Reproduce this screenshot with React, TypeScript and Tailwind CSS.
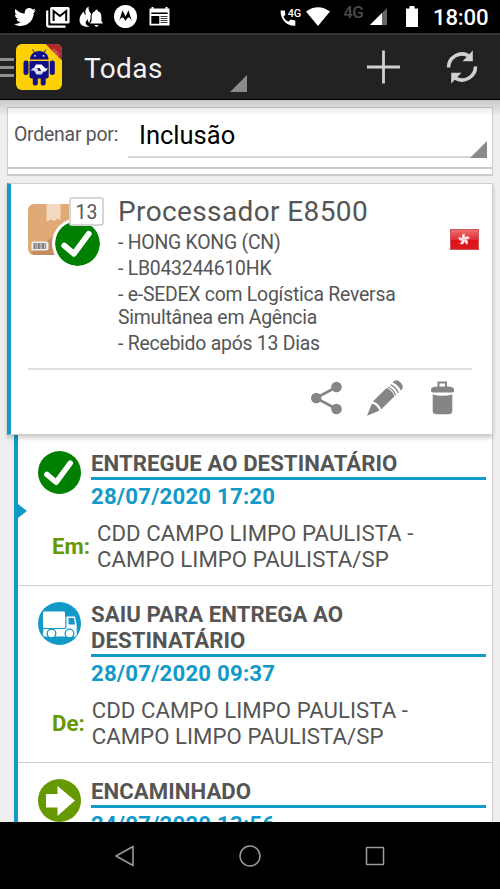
import React from "react";
import { FaTwitter } from "react-icons/fa";

const StatusBar = () => (
  <div className="flex h-[33px] shrink-0 items-center justify-between bg-black text-white">
    <div className="flex items-center pl-[14px]">
      <FaTwitter className="h-[22px] w-[22px]" />
      <svg className="ml-[10px] h-[22px] w-[24px]" viewBox="0 0 24 22" fill="none">
        <path d="M1.2 4.5v14.3q0 1.8 1.8 1.8h16.5" stroke="white" strokeWidth="2.2" />
        <rect x="4.2" y="1" width="19.4" height="16.6" rx="1.6" fill="white" />
        <path d="M7.6 15V5l6.3 5 6.3-5v10" stroke="black" strokeWidth="2" />
      </svg>
      <svg className="ml-[9px] h-[22px] w-[24px]" viewBox="0 0 24 22" fill="white">
        <path d="M9.7 0.5C5.5 3 6 6.500 7.200 9.200 5.400 8.700 5 7 5 5.600 1.800 8.300 0.500 11.300 0.500 14c0 3.600 2.300 6 6 6.700 2 0.300 3.200 0 4.200-0.500-3.800-0.700-5.200-3.200-3-5.800l1.200-1.300c-0.200 1.800 0.300 2.900 1.300 3.800C12.300 13.500 11 9.500 12.200 8 9.800 5.500 9.200 2.600 9.700 0.500z" />
        <path d="M17.500 3.800c1 0 1.400 0.700 1.400 1.500 2.600 0.800 3.500 3 3.500 5.500v4.200l1.600 2.600H11l1.600-2.600v-4.200c0-2.500 0.900-4.700 3.500-5.500 0-0.800 0.400-1.500 1.400-1.500z" />
        <path d="M15.700 18.900h3.600q-0.300 1.900-1.800 1.900t-1.800-1.900z" />
      </svg>
      <svg className="ml-[11px] h-[23px] w-[23px]" viewBox="0 0 23 23">
        <circle cx="11.500" cy="11.500" r="11.500" fill="white" />
        <path d="M5 16.500 8.500 5.200l3 6.400 3-6.400L18 16.500c-1.200-2.600-2.200-4-3.300-4-1.200 0-2 1.300-3.200 3.600-1.200-2.300-2-3.600-3.200-3.600-1.100 0-2.100 1.400-3.300 4z" fill="black" />
      </svg>
      <svg className="ml-[12px] h-[20px] w-[21px]" viewBox="0 0 21 20">
        <path d="M0.500 1.500h2V0h2v1.500h12V0h2v1.500h2V18.500h-20z" fill="white" />
        <path d="M2.300 5.500h16.400v1.500H2.300zM2.300 9h8v7.700h-8z" fill="black" />
        <path d="M11.500 9.500h7M11.500 11.500h7M11.500 13.500h7M11.500 15.500h7" stroke="black" strokeWidth="0.800" />
      </svg>
    </div>
    <div className="flex items-center pr-[11px]">
      <svg className="h-[22px] w-[22px]" viewBox="0 0 22 22">
        <path d="M0.600 4.500h4.200l0.600 4.300-2 2q1.800 3.700 5 5l2.200-2.200 4.700 0.900v5.200C7 20.500 0.200 13.500 0.600 4.500z" fill="white" />
        <text x="7.700" y="11" fill="white" fontSize="11.500" fontFamily="Roboto" fontWeight="500" textLength="13.500" lengthAdjust="spacingAndGlyphs">4G</text>
      </svg>
      <svg className="ml-[4px] h-[19px] w-[24px]" viewBox="0 0 24 19">
        <path d="M0 4.500Q12-4 24 4.500L12 19z" fill="white" />
      </svg>
      <span className="ml-[13px] -mt-[9px] text-[17px] leading-5 font-medium tracking-[-0.8px] text-[#4a4a4a]">4G</span>
      <svg className="ml-[7px] h-[17px] w-[17px]" viewBox="0 0 17 17">
        <path d="M0 17 17 0v17z" fill="#666" />
        <path d="M0 17 12 5v12z" fill="white" />
      </svg>
      <svg className="ml-[19px] h-[21px] w-[12px]" viewBox="0 0 12 21">
        <path d="M0 2.500h3.500V0h5v2.500H12V21H0z" fill="white" />
      </svg>
      <span className="ml-[15px] w-[56px] text-[22.200px] leading-[26px] font-medium tracking-[-0.200px] whitespace-nowrap">18:00</span>
    </div>
  </div>
);

const AppIcon = () => (
  <svg className="h-[46px] w-[46px]" viewBox="0 0 46 46">
    <defs>
      <clipPath id="rounded">
        <rect width="46" height="46" rx="6" />
      </clipPath>
    </defs>
    <g clipPath="url(#rounded)">
      <rect width="46" height="46" fill="#ffd105" />
      <path d="M29.500 0H46v16.500z" fill="#b02a30" />
      <text x="35.500" y="6.500" transform="rotate(45 35.500 6.500)" fill="#e88d8d" fontSize="4.500" fontFamily="Roboto">PRO</text>
    </g>
    <g fill="#10108a">
      <path d="M14 15.500c0-5 4-8.500 9.200-8.500s9.300 3.500 9.300 8.500z" />
      <path d="M13.500 17h19.200v15.500q0 2-2 2H15.500q-2 0-2-2z" />
      <rect x="7.500" y="16.500" width="5" height="14.500" rx="2.300" />
      <rect x="33.800" y="16.500" width="5" height="14.500" rx="2.300" />
      <rect x="16.800" y="30" width="5" height="11.500" rx="2" />
      <rect x="24.700" y="30" width="5" height="11.500" rx="2" />
    </g>
    <path d="m18.500 8.500-2-3m11.500 3 2-3" stroke="#10108a" strokeWidth="1" />
    <circle cx="19" cy="11.800" r="0.900" fill="white" />
    <circle cx="27.500" cy="11.800" r="0.900" fill="white" />
    <path d="M20 20.500h5.500l4 4h2.500l-2.500 3h-4l-2-3.500h-5.500z" fill="white" />
    <path d="M14.500 26.500 17 24h4l1.500 3h5.500l-2.500 3.500h-5l-2.500-4z" fill="#d7dbf0" />
  </svg>
);

const Header = () => (
  <header className="flex h-[67px] shrink-0 items-center border-t-2 border-b border-t-[#353535] border-b-black bg-[#222]">
    <div className="flex w-[14px] flex-col gap-[5px]">
      <div className="h-[3px] bg-[#909090]" />
      <div className="h-[3px] bg-[#909090]" />
      <div className="h-[3px] bg-[#909090]" />
    </div>
    <div className="ml-[2px]">
      <AppIcon />
    </div>
    <div className="ml-[22px] flex h-[56px] w-[163px] items-center justify-between">
      <span className="mt-[3px] text-[28px] tracking-[0.400px] text-[#f3f3f3]">Todas</span>
      <svg className="mb-[3px] h-[17px] w-[17px] self-end" viewBox="0 0 17 17">
        <path d="M0 17 17 0v17z" fill="#8a8a8a" />
      </svg>
    </div>
    <svg className="ml-[120px] h-[34px] w-[34px]" viewBox="0 0 34 34">
      <path d="M0 17h33M16.500 0.500v33" stroke="#d0d0d0" strokeWidth="2.800" />
    </svg>
    <svg className="ml-[44px] h-[34px] w-[34px]" viewBox="0 0 34 34" fill="none">
      <path d="M3.500 17.500A13.500 13.500 0 0 1 24 6" stroke="#d0d0d0" strokeWidth="3.600" />
      <path d="M27.800 0.500v10.800H17.500z" fill="#d0d0d0" />
      <path d="M30.500 16.500A13.500 13.500 0 0 1 10 28" stroke="#d0d0d0" strokeWidth="3.600" />
      <path d="M6.200 33.500V22.700h10.300z" fill="#d0d0d0" />
    </svg>
  </header>
);

const SortCard = () => (
  <div className="mx-[7px]">
    <div className="flex h-[62px] border border-b-2 border-[#cbcbcb] bg-white">
      <span className="mt-[15px] ml-[6px] w-[114px] text-[19.400px] leading-[24px] tracking-[-0.220px] whitespace-nowrap text-[#555]">Ordenar por:</span>
      <div className="mb-[9px] flex w-[359px] items-start justify-between border-b-2 border-[#d6d6d6]">
        <span className="mt-[12px] ml-[11px] text-[25.500px] leading-[30px] text-black">Inclusão</span>
        <svg className="-mb-[2px] h-[17px] w-[17px] self-end" viewBox="0 0 17 17">
          <path d="M0 17 17 0v17z" fill="#8a8a8a" />
        </svg>
      </div>
    </div>
    <div className="h-[7px] border-x border-b-2 border-[#cbcbcb] bg-white" />
  </div>
);

const CheckBadge = ({ className }: { className: string }) => (
  <svg className={className} viewBox="0 0 44 44">
    <circle cx="22" cy="22" r="22" fill="#008000" />
    <path d="m9 24 9.500 8L33 12.500" stroke="white" strokeWidth="5.600" strokeLinecap="round" strokeLinejoin="round" fill="none" />
  </svg>
);

const PackageIcon = () => (
  <div className="relative h-[72px] w-[77px]">
    <svg className="absolute top-[7px] left-0 h-[51px] w-[51px]" viewBox="0 0 51 51">
      <rect width="51" height="51" rx="6" fill="#e0aa78" />
      <path d="M3 49 51 13v38H6z" fill="#c18d61" />
      <path d="M18.500 0h14v16l-3-1.500-3 2.500-3.500-1.500-4.500 2z" fill="#f4d8bf" />
      <rect x="3.500" y="37.500" width="17" height="9" rx="2" fill="#eee" />
      <path d="M5.500 42h13" stroke="#777" strokeWidth="6" strokeDasharray="2 0.700 1 0.600" />
    </svg>
    <CheckBadge className="absolute top-[24px] left-[27px] h-[45px] w-[45px] rounded-full bg-white ring-3 ring-white" />
    <span className="absolute top-0 left-[41px] flex h-[29px] w-[35px] items-center justify-center rounded-[3px] border-2 border-[#d6d6d6] bg-white pt-[2px] text-[19.400px] leading-none text-[#555]">
      13
    </span>
  </div>
);

const Flag = () => (
  <svg className="h-[21px] w-[29px]" viewBox="0 0 29 21">
    <defs>
      <linearGradient id="flag" x1="0" y1="0" x2="0" y2="1">
        <stop offset="0" stopColor="#ee7070" />
        <stop offset="0.500" stopColor="#e02f34" />
        <stop offset="0.520" stopColor="#dc1218" />
        <stop offset="1" stopColor="#e01a22" />
      </linearGradient>
    </defs>
    <rect x="0.500" y="0.500" width="28" height="20" fill="url(#flag)" stroke="#cf5558" />
    {[0, 72, 144, 216, 288].map((angle) => (
      <path key={angle} d="M14 10.500c-3.500-2-2.500-5.500 1-6-1.200 2 1.200 3-1 6z" fill="#fde5e5" transform={`rotate(${angle} 14 10.500)`} />
    ))}
  </svg>
);

const ParcelCard = () => (
  <div className="relative z-10 mx-[7px] mt-[7px] h-[252px] border-t border-r border-b border-l-4 border-t-[#cfcfcf] border-r-[#cfcfcf] border-b-[#cfcfcf] border-l-[#1299c7] bg-white shadow-[0_3px_4px_rgba(0,0,0,0.2)]">
    <div className="flex h-[184px] pl-[17px]">
      <div className="mt-[13px]">
        <PackageIcon />
      </div>
      <div className="mt-[11px] ml-[13px] w-[310px] text-[19.400px] leading-[22.500px] tracking-[-0.230px] text-[#555]">
        <h1 className="text-[28px] leading-[33px] tracking-[0.380px] whitespace-nowrap">Processador E8500</h1>
        <p className="mt-[4px]">- HONG KONG (CN)</p>
        <p className="mt-[3.500px]">- LB043244610HK</p>
        <p className="mt-[3.500px]">- e-SEDEX com Logística Reversa<br />Simultânea em Agência</p>
        <p className="mt-[3.500px]">- Recebido após 13 Dias</p>
      </div>
      <div className="mt-[45px] ml-[22px]">
        <Flag />
      </div>
    </div>
    <div className="mr-[20px] ml-[17px] flex items-center border-t-2 border-[#e0e0e0] pt-[10px] pl-[283px]">
      <svg className="h-[34px] w-[31px]" viewBox="0 0 31 34">
        <path d="M25.500 6 5 17l20.500 11" stroke="#858585" strokeWidth="2.600" fill="none" />
        <circle cx="5.200" cy="17" r="5.200" fill="#858585" />
        <circle cx="25.500" cy="6" r="5.300" fill="#858585" />
        <circle cx="25.500" cy="28" r="5.300" fill="#858585" />
      </svg>
      <svg className="ml-[25px] h-[36px] w-[36px]" viewBox="0 0 36 36" fill="#858585">
        <path d="M0 35.800 4.800 23.800Q9 24 12.500 30.500z" />
        <path d="M5.800 21.500 19.500 8q5 1.200 8 8.300L14 29.500q-2-6.500-8.200-8z" />
        <path d="m25.500 2.500 2-1.700q3-1.500 6 1.600 3 3.200 2 6l-1.800 2q-2.500-6-8.200-7.900z" />
        <path d="M21 7q5 1.500 7.500 8.200M23.500 4.800q5.400 2 7.800 8.200" stroke="#858585" strokeWidth="1.300" fill="none" />
      </svg>
      <svg className="ml-[28px] h-[34px] w-[23px]" viewBox="0 0 23 34" fill="#858585">
        <path d="M7.500 6V1.600H15V6" fill="none" stroke="#858585" strokeWidth="2" />
        <path d="M0 10V8.500Q0 5.500 7 5.500h9q7 0 7 3V10q0 1.500-2.500 1.500h-18Q0 11.500 0 10z" />
        <path d="M1.700 13.500q9.800 2.500 19.600 0V30q0 3.300-4 3.300H5.700q-4 0-4-3.300z" />
      </svg>
    </div>
  </div>
);

const TruckBadge = () => (
  <svg className="h-[43px] w-[43px]" viewBox="0 0 43 43">
    <circle cx="21.500" cy="21.500" r="21.500" fill="#1299c7" />
    <rect x="5" y="9.500" width="22" height="16.500" rx="1" fill="white" />
    <path d="M5.500 27h22V14.500h9.500l1.700 8.500v9.500q0 2-2 2H6.500q-1.500 0-1.500-2z" fill="white" />
    <path d="M5 26.500h22.500" stroke="#1299c7" strokeWidth="0.900" />
    <path d="M30.500 16h5.500l1 6.500h-6.500z" fill="#1299c7" />
    <path d="M28 9v17" stroke="#1299c7" strokeWidth="0.900" />
    <circle cx="13.500" cy="31.500" r="4.300" fill="white" stroke="#1299c7" strokeWidth="1.300" />
    <circle cx="31.500" cy="31.500" r="4.300" fill="white" stroke="#1299c7" strokeWidth="1.300" />
  </svg>
);

const ArrowBadge = () => (
  <svg className="h-[43px] w-[43px]" viewBox="0 0 43 43">
    <circle cx="21.500" cy="21.500" r="21.500" fill="#669900" />
    <path d="M8 15h11.500V7L37 21.500 19.500 37v-8.500H8z" fill="white" />
  </svg>
);

const events = [
  {
    icon: <CheckBadge className="h-[43px] w-[43px]" />,
    title: ["ENTREGUE AO DESTINATÁRIO"],
    date: "28/07/2020 17:20",
    label: "Em:",
    place: ["CDD CAMPO LIMPO PAULISTA -", "CAMPO LIMPO PAULISTA/SP"],
  },
  {
    icon: <TruckBadge />,
    title: ["SAIU PARA ENTREGA AO", "DESTINATÁRIO"],
    date: "28/07/2020 09:37",
    label: "De:",
    place: ["CDD CAMPO LIMPO PAULISTA -", "CAMPO LIMPO PAULISTA/SP"],
  },
  {
    icon: <ArrowBadge />,
    title: ["ENCAMINHADO"],
    date: "24/07/2020 13:56",
  },
];

const Timeline = () => (
  <div className="relative mr-[7px] ml-[14px] border-r border-l-4 border-r-[#cfcfcf] border-l-[#1299c7] bg-white text-[22.200px] leading-[26px]">
    {events.map((event, index) => (
      <div key={index} className="border-b border-[#cfcfcf] pb-[13px]">
        <div className="flex pt-[15px] pr-[6px] pl-[20px]">
          <div className="mt-px w-[53px] shrink-0">{event.icon}</div>
          <div className="flex-1 font-bold">
            <h2 className="tracking-[0.050px] text-[#555]">
              {event.title.map((line) => (
                <span key={line} className="block whitespace-nowrap">{line}</span>
              ))}
            </h2>
            <div className="mt-px h-[3px] bg-[#1299c7]" />
            <p className="mt-[3px] tracking-[0.200px] text-[#1299c7]">{event.date}</p>
          </div>
        </div>
        {event.place && (
          <div className="mt-[11px] flex items-center pl-[34px]">
            <span className="mr-[7px] font-bold text-[#669900]">{event.label}</span>
            <p className="tracking-[0.050px] text-[#555]">
              {event.place.map((line) => (
                <span key={line} className="block whitespace-nowrap">{line}</span>
              ))}
            </p>
          </div>
        )}
      </div>
    ))}
    {/* Selection pointer */}
    <svg className="absolute top-[69px] left-0 h-[14px] w-[9px]" viewBox="0 0 9 14">
      <path d="M0 0 9 7 0 14z" fill="#1299c7" />
    </svg>
  </div>
);

const NavBar = () => (
  <nav className="flex h-[67px] shrink-0 items-center justify-center gap-[101px] bg-black">
    <svg className="h-[24px] w-[24px]" viewBox="0 0 24 24" fill="none">
      <path d="M20 2.500v19L3 12z" stroke="#9a9a9a" strokeWidth="1.600" strokeLinejoin="round" />
    </svg>
    <svg className="h-[24px] w-[24px]" viewBox="0 0 24 24" fill="none">
      <circle cx="12" cy="12" r="10" stroke="#9a9a9a" strokeWidth="1.500" />
    </svg>
    <svg className="h-[24px] w-[24px]" viewBox="0 0 24 24" fill="none">
      <rect x="3.500" y="3.500" width="17" height="17" rx="0.500" stroke="#9a9a9a" strokeWidth="1.500" />
    </svg>
  </nav>
);

export default function App() {
  return (
    <div className="flex h-[889px] w-[500px] flex-col overflow-hidden bg-[#eee] font-['Roboto',sans-serif]">
      <StatusBar />
      <Header />
      <main className="relative min-h-0 flex-1 overflow-hidden pt-[7px]">
        <SortCard />
        <ParcelCard />
        <Timeline />
        {/* Shadow cast by the header */}
        <div className="absolute inset-x-0 top-0 h-[16px] bg-linear-to-b from-black/15 to-transparent" />
      </main>
      <NavBar />
    </div>
  );
}
